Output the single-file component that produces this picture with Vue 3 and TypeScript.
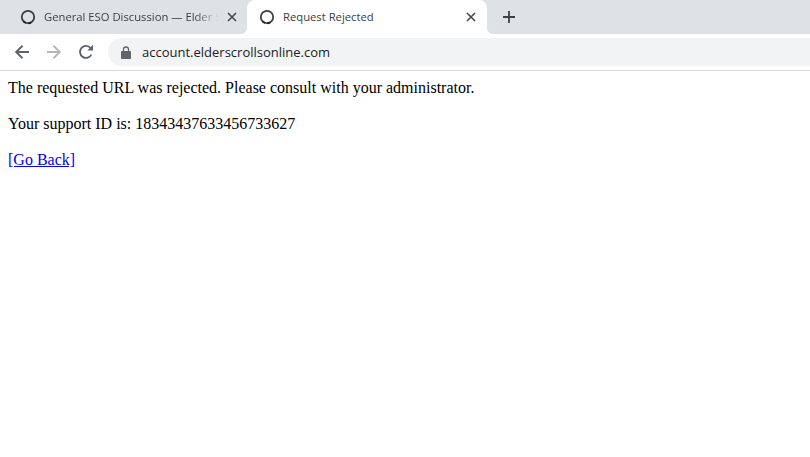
<template>
  <div class="browser">
    <div class="tabstrip">
      <div class="tab first">
        <svg class="spinner" width="16" height="16" viewBox="0 0 16 16">
          <circle cx="8" cy="8" r="6.2" fill="none" stroke="#3c4043" stroke-width="1.8" />
          <path d="M3.5 12.4A6.2 6.2 0 0 0 12.4 12.4" fill="none" stroke="#222" stroke-width="1.9" stroke-dasharray="3 2" />
        </svg>
        <span class="tab-title fade">General ESO Discussion — Elder Scrolls</span>
        <svg class="close" width="10" height="10" viewBox="0 0 10 10">
          <path d="M1 1l8 8M9 1l-8 8" stroke="#45484c" stroke-width="1.6" />
        </svg>
      </div>
      <div class="tab active">
        <svg class="spinner" width="16" height="16" viewBox="0 0 16 16">
          <circle cx="8" cy="8" r="6.2" fill="none" stroke="#3c4043" stroke-width="1.8" />
          <path d="M3.5 12.4A6.2 6.2 0 0 0 12.4 12.4" fill="none" stroke="#222" stroke-width="1.9" stroke-dasharray="3 2" />
        </svg>
        <span class="tab-title">Request Rejected</span>
        <svg class="close" width="10" height="10" viewBox="0 0 10 10">
          <path d="M1 1l8 8M9 1l-8 8" stroke="#45484c" stroke-width="1.6" />
        </svg>
      </div>
      <svg class="newtab" width="14" height="14" viewBox="0 0 14 14">
        <path d="M7 1v12M1 7h12" stroke="#3c4043" stroke-width="1.8" />
      </svg>
    </div>
    <div class="toolbar">
      <svg class="nav" width="16" height="16" viewBox="0 0 16 16">
        <path d="M15 8H2.5M8.5 1.8L2.2 8l6.3 6.2" fill="none" stroke="#5f6368" stroke-width="1.9" />
      </svg>
      <svg class="nav" width="16" height="16" viewBox="0 0 16 16">
        <path d="M1 8h12.5M7.5 1.8L13.8 8l-6.3 6.2" fill="none" stroke="#b4b6b9" stroke-width="1.9" />
      </svg>
      <svg class="nav" width="16" height="16" viewBox="0 0 16 16">
        <path d="M13.4 10.6A6 6 0 1 1 12.6 4" fill="none" stroke="#5f6368" stroke-width="1.9" />
        <path d="M9.4 6.4h5.6V0.8z" fill="#5f6368" />
      </svg>
      <div class="omnibox">
        <svg width="10" height="13" viewBox="0 0 10 13">
          <path d="M1 5h8a1 1 0 0 1 1 1v6a1 1 0 0 1-1 1H1a1 1 0 0 1-1-1V6a1 1 0 0 1 1-1z" fill="#5f6368" />
          <path d="M2.5 5V3.5a2.5 2.5 0 0 1 5 0V5" fill="none" stroke="#5f6368" stroke-width="1.3" />
        </svg>
        <span class="url">account.elderscrollsonline.com</span>
      </div>
    </div>
    <main class="page">
      <p>The requested URL was rejected. Please consult with your administrator.</p>
      <p>Your support ID is: {{ supportId }}</p>
      <p><a href="javascript:history.back();">[Go Back]</a></p>
    </main>
  </div>
</template>

<script setup lang="ts">
const supportId = '18343437633456733627'
</script>

<style scoped>
.browser {
  width: 810px;
  height: 457px;
  overflow: hidden;
  background: #fff;
  display: flex;
  flex-direction: column;
}

.tabstrip {
  height: 34px;
  flex: none;
  background: #dee1e6;
  display: flex;
  align-items: flex-end;
  padding-left: 8px;
  font-family: "Open Sans", "Noto Sans", sans-serif;
  font-size: 11.25px;
  color: #3c4043;
}

.tab {
  position: relative;
  width: 239px;
  height: 34px;
  box-sizing: border-box;
  padding: 0 10px 0 12px;
  display: flex;
  align-items: center;
  gap: 8px;
}

.tab.active {
  width: 240px;
  padding-right: 11px;
  background: #fff;
  border-radius: 8px 8px 0 0;
}

/* outward curves at the foot of the active tab */
.tab.active::before,
.tab.active::after {
  content: "";
  position: absolute;
  bottom: 0;
  width: 7px;
  height: 7px;
}

.tab.active::before {
  left: -7px;
  background: radial-gradient(circle at 0 0, transparent 7px, #fff 7.5px);
}

.tab.active::after {
  right: -7px;
  background: radial-gradient(circle at 100% 0, transparent 7px, #fff 7.5px);
}

.tab-title {
  flex: 1;
  min-width: 0;
  margin-top: -1px;
  white-space: nowrap;
  overflow: hidden;
}

.fade {
  -webkit-mask-image: linear-gradient(to right, #000 86%, transparent 100%);
  mask-image: linear-gradient(to right, #000 86%, transparent 100%);
}

.spinner {
  flex: none;
}

.close {
  flex: none;
}

.newtab {
  align-self: center;
  margin-left: 15px;
}

.toolbar {
  height: 37px;
  flex: none;
  box-sizing: border-box;
  border-bottom: 1px solid #dadce0;
  display: flex;
  align-items: center;
  padding: 0 0 0 14px;
  gap: 16px;
}

.omnibox {
  flex: 1;
  height: 28px;
  margin-left: -2px;
  background: #f1f3f4;
  border-radius: 14px 0 0 14px;
  display: flex;
  align-items: center;
  gap: 11px;
  padding-left: 13px;
  font-family: "Open Sans", "Noto Sans", sans-serif;
  font-size: 13px;
  color: #202124;
}

.page {
  padding: 0 8px;
  font-family: "Liberation Serif", serif;
  font-size: 16px;
  color: #000;
}

.page p {
  margin: 8px 0 18px;
}

.page a {
  color: #0000ee;
}
</style>
